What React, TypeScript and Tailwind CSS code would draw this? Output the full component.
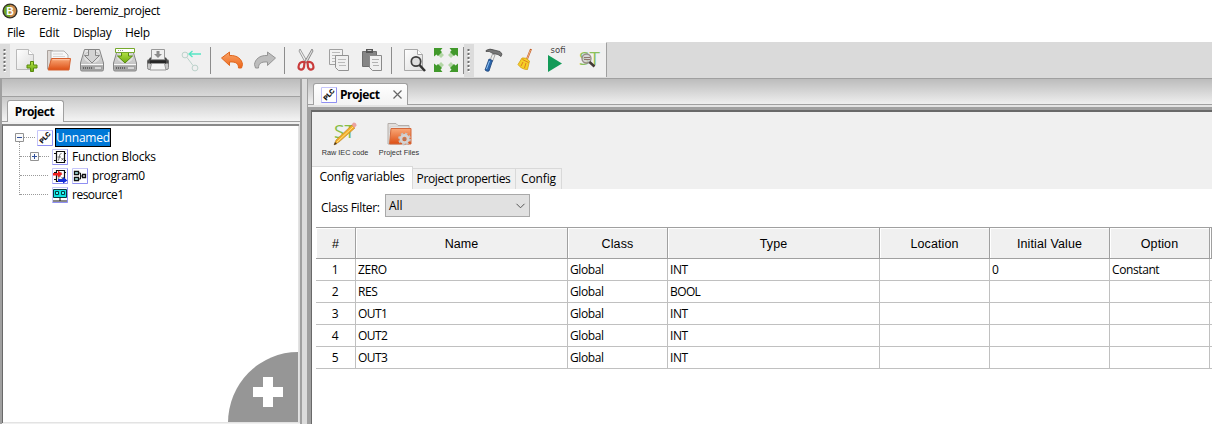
import React from "react";

type IconProps = { className?: string };

const Svg = ({ w = 24, h = 24, className = "", children }: { w?: number; h?: number; className?: string; children: React.ReactNode }) => (
  <svg width={w} height={h} viewBox={`0 0 ${w} ${h}`} className={`block shrink-0 overflow-visible ${className}`} fill="none">
    {children}
  </svg>
);

const Defs = () => (
  <svg width="0" height="0" className="absolute">
    <defs>
      <linearGradient id="orange" x1="0" y1="0" x2="0" y2="1"><stop offset="0" stopColor="#f9a877" /><stop offset="1" stopColor="#dd4f14" /></linearGradient>
      <linearGradient id="metal" x1="0" y1="0" x2="0" y2="1"><stop offset="0" stopColor="#e9e9e9" /><stop offset="1" stopColor="#b2b2b2" /></linearGradient>
      <linearGradient id="paper" x1="0" y1="0" x2="1" y2="1"><stop offset="0" stopColor="#ffffff" /><stop offset="1" stopColor="#dcdcdc" /></linearGradient>
      <linearGradient id="green" x1="0" y1="0" x2="0" y2="1"><stop offset="0" stopColor="#b5e345" /><stop offset="1" stopColor="#6dab13" /></linearGradient>
      <linearGradient id="undo" x1="0" y1="0" x2="0" y2="1"><stop offset="0" stopColor="#f9a56a" /><stop offset="1" stopColor="#ee6518" /></linearGradient>
    </defs>
  </svg>
);

const Logo = () => (
  <Svg w={16} h={16}>
    <circle cx="8" cy="8" r="7.6" fill="#35302a" />
    <path d="M8 1.8A6.2 6.2 0 0 1 8 14.2Z" fill="#c98a4e" />
    <path d="M8 1.8A6.2 6.2 0 0 0 8 14.2Z" fill="#6fa322" />
    <text x="8" y="11.800" textAnchor="middle" fill="#fff" className="font-['Liberation_Sans',sans-serif] text-[10.5px] font-bold tracking-normal">B</text>
  </Svg>
);

const NewIcon = ({ className }: IconProps) => (
  <Svg className={className}>
    <path d="M1.500 1.500h12l5 5v15h-17z" fill="url(#paper)" stroke="#bababa" />
    <path d="M13.500 1.500v5h5" fill="#fff" stroke="#bbb" />
    <path d="M15.500 13.500h3v3.500h3.500v3h-3.500v3.500h-3v-3.500H12v-3h3.500z" fill="url(#green)" stroke="#58890f" />
  </Svg>
);
const OpenIcon = ({ className }: IconProps) => (
  <Svg w={25} className={className}>
    <path d="M1.500 21V2.500h5l1 2h3V21z" fill="#ded8d4" stroke="#aaa29d" />
    <path d="M5 3h13l4 4v8H5z" fill="#f7f7f7" stroke="#b2b2b2" />
    <path d="M7 6h10M7 8.500h12" stroke="#d5d5d5" />
    <path d="M5.500 10.500h19l-1.500 11.500H2.200z" fill="url(#orange)" stroke="#d6602e" />
    <path d="M6.500 11.700h17" stroke="#ffc6a5" />
  </Svg>
);
const Drive = () => (
  <>
    <path d="M4.500 1.500h15L23.500 15v6.500q0 1.500-1.500 1.500H2q-1.500 0-1.500-1.500V15z" fill="url(#metal)" stroke="#858585" />
    <ellipse cx="12" cy="9.500" rx="8.500" ry="6" stroke="#c4c4c4" fill="#e0e0e0" />
    <path d="M1 16.500h22" stroke="#f7f7f7" />
    <path d="M1.500 17.500h21v4.500h-21z" fill="#a2a2a2" />
    <path d="M3 20h10" stroke="#666" strokeWidth="2" strokeDasharray="1 1" />
    <path d="M15 20h6" stroke="#d5d5d5" strokeWidth="2" />
  </>
);
const SaveIcon = ({ className }: IconProps) => (
  <Svg className={className}><Drive /><path d="M8.500 1.500h7v6h4L12 15 4.500 7.500h4z" fill="#d3d3d3" stroke="#858585" /></Svg>
);
const SaveAsIcon = ({ className }: IconProps) => (
  <Svg className={className}>
    <Drive /><path d="M8.500 4v4h-4L12 15l7.500-7h-4V4z" fill="url(#green)" stroke="#56890f" />
    <path d="M2.500.5h19v4h-19z" fill="#fff" stroke="#76a92c" /><path d="M5 2.500h6" stroke="#999" strokeDasharray="1 1" />
  </Svg>
);
const PrintIcon = ({ className }: IconProps) => (
  <Svg className={className}>
    <path d="M1.500 12h21v7.500q0 2-1.500 2H3q-1.500 0-1.500-2z" fill="#cacaca" stroke="#888" />
    <path d="M4 9.500h16l2.500 4v2h-21v-2z" fill="#4a4a4a" />
    <path d="M5.500 1.500h13v10h-13z" fill="#f0f0f0" stroke="#999" />
    <path d="M10.500 3h3v3h2.500l-4 4-4-4h2.500z" fill="#8c8c8c" />
    <path d="M4 12.500h16v3H4z" fill="#262626" />
    <path d="M5.500 15.500h13l1.500 6.500H4z" fill="#f4f4f4" stroke="#999" />
  </Svg>
);
const LinkIcon = ({ className }: IconProps) => (
  <Svg className={className}>
    <circle cx="5" cy="7" r="2.900" stroke="#bcd2cb" /><circle cx="15" cy="20" r="2.900" stroke="#bcd2cb" />
    <path d="m7 9.500 6 8" stroke="#bcd2cb" /><path d="M9 6h12M12.500 3 9 6l3.500 3" stroke="#55e5c3" strokeWidth="1.300" />
  </Svg>
);
const UndoIcon = ({ className }: IconProps) => (
  <Svg className={className}><path d="M1.500 10 9.500 4v3.500c8-.5 12.500 4 13 9l-1 3.500h-3c0-4-2-6.500-9-6v3.500z" fill="url(#undo)" stroke="#df671e" /></Svg>
);
const RedoIcon = ({ className }: IconProps) => (
  <Svg className={className}><path d="M22.500 10 14.500 4v3.500C6.500 7 2 11.500 1.500 16.500l1 3.500h3c0-4 2-6.500 9-6v3.500z" fill="#bdbdbd" stroke="#959595" /></Svg>
);
const CutIcon = ({ className }: IconProps) => (
  <Svg className={className}>
    <path d="m6 1 7.500 13-2 1L5 3z" fill="#eee" stroke="#888" strokeWidth=".8" /><path d="m18 1-7.500 13 2 1L19 3z" fill="#ddd" stroke="#777" strokeWidth=".8" />
    <path d="M10.500 14C6.500 13 4.500 16 4.500 19s4.500 4 5.500 0zM13.500 14c4-1 6 2 6 5s-4.500 4-5.500 0z" stroke="#c93b3b" strokeWidth="2.200" />
  </Svg>
);
const CopyIcon = ({ className }: IconProps) => (
  <Svg className={className}>
    <path d="M2.500 1.500h13v15h-13z" fill="#f2f2f2" stroke="#a0a0a0" /><path d="M5 4.500h8M5 7.500h5M5 10.500h3M5 13.500h3" stroke="#bababa" />
    <path d="M8.500 7.500h13v15h-10l-3-3z" fill="#f0f0f0" stroke="#929292" /><path d="M11 11.500h8M11 14.500h7M12 17.500h7" stroke="#bababa" />
  </Svg>
);
const PasteIcon = ({ className }: IconProps) => (
  <Svg className={className}>
    <path d="M2.500 3.500h14v15h-14z" fill="#858585" stroke="#6e6e6e" /><path d="M6 1h7v4H6z" fill="#555" /><path d="M7.500 2.500h4" stroke="#ccc" />
    <path d="M9.500 7.500h12v15h-9l-3-3z" fill="#f0f0f0" stroke="#8a8a8a" /><path d="M12 11.500h7M12 14.500h6M13 17.500h6" stroke="#b2b2b2" />
  </Svg>
);
const PreviewIcon = ({ className }: IconProps) => (
  <Svg className={className}>
    <path d="M1.500 1.500h13l5 5v16h-18z" fill="url(#paper)" stroke="#a8a8a8" /><path d="M14.500 1.500v5h5" fill="#fff" stroke="#a8a8a8" />
    <circle cx="13" cy="13.500" r="4.700" stroke="#3e3e3e" strokeWidth="1.700" fill="#dedede" /><path d="m16.500 17 5.500 6" stroke="#333" strokeWidth="2.500" />
  </Svg>
);
const ExpandIcon = ({ className }: IconProps) => (
  <Svg className={className}>
    <path d="m4 7 3-3 3 3-3 3zM20 7l-3-3-3 3 3 3zM4 17l3 3 3-3-3-3zM20 17l-3 3-3-3 3-3z" fill="#b3d6a6" />
    <path d="M0 0h8.500L6.500 2.500 8 4 4 8 2.500 6.500 0 8.500zM24 0h-8.500l2 2.500L16 4l4 4 1.500-1.500L24 8.500zM0 24h8.500l-2-2.500L8 20l-4-4-1.500 1.500L0 15.500zM24 24h-8.500l2-2.500L16 20l4-4 1.500 1.500 2.500-2z" fill="#41992b" />
  </Svg>
);
const HammerIcon = ({ className }: IconProps) => (
  <Svg className={className}>
    <path d="m11.500 6 2.500 1-2.500 6.500-2.500-1z" fill="#eee" stroke="#888" strokeWidth=".7" />
    <path d="m8 11 3.500 1.500L8 23q-2 1-4-1z" fill="#2b67ae" stroke="#1c4278" strokeWidth=".8" /><path d="m8.500 13-3 8" stroke="#8fc0ef" />
    <path d="M5 2.500Q9 0 13 2l6 1.500L21 6l-1 2.500-3-2-5-1Q8 2.500 5 3.500z" fill="#777" stroke="#4b4b4b" strokeWidth=".8" />
  </Svg>
);
const BroomIcon = ({ className }: IconProps) => (
  <Svg className={className}>
    <path d="m17 1-4 10" stroke="#c05a24" strokeWidth="2" /><path d="m16.500 2-3.500 9" stroke="#f2b07e" />
    <path d="M8 10q4-1 7.500 3l-2 8.500q-6 0-9.500-5z" fill="#f5cf24" stroke="#d19c13" strokeWidth=".8" />
    <path d="m8.500 11.500 6 3M9 14l-2 4M12 15l-1.500 5" stroke="#d35b20" strokeWidth=".7" />
  </Svg>
);
const StSearchIcon = ({ className }: IconProps) => (
  <Svg className={className}>
    <text x="0" y="17" fill="#8ac05a" className="font-['Open_Sans',sans-serif] text-[19px] tracking-[0px]">ST</text>
    <circle cx="7.500" cy="10.500" r="4.500" stroke="#978d88" fill="#ccc" fillOpacity=".75" strokeWidth="1.400" /><path d="M5 9.500h6M5 11.500h6" stroke="#91766c" /><path d="m10.500 14 5 4.500" stroke="#433b37" strokeWidth="2.600" />
  </Svg>
);

const Grip = () => (
  <div className="flex h-[33px] w-[10px] shrink-0 justify-center bg-[#dcdcdc]">
    <Svg w={4} h={33}><path d="M2 6v24" stroke="#fff" strokeWidth="2" strokeDasharray="2 2" /><path d="M1.500 5v24" stroke="#707070" strokeWidth="2" strokeDasharray="2 2" /></Svg>
  </div>
);
const Sep = ({ className = "" }: IconProps) => <div className={`h-[27px] w-px shrink-0 bg-[#8c8c8c] ${className}`} />;

const Toolbar = () => (
  <div className="flex h-[36px] bg-[#dadada]">
    <div className="flex h-[35px] w-[607px] items-center border-t border-r border-r-[#a0a0a0] border-t-white bg-[#f0f0f0]">
      <Grip />
      <NewIcon className="ml-[5px]" />
      <OpenIcon className="ml-[7px]" />
      <SaveIcon className="ml-[9px]" />
      <SaveAsIcon className="ml-[9px]" />
      <PrintIcon className="ml-[9px]" />
      <LinkIcon className="ml-[10px]" />
      <Sep className="ml-[6px]" />
      <UndoIcon className="ml-[9px]" />
      <RedoIcon className="ml-[9px]" />
      <Sep className="ml-[7px]" />
      <CutIcon className="ml-[9px]" />
      <CopyIcon className="ml-[9px]" />
      <PasteIcon className="ml-[9px]" />
      <Sep className="ml-[7px]" />
      <PreviewIcon className="ml-[11px]" />
      <ExpandIcon className="ml-[7px]" />
      <Sep className="ml-[5px]" />
      <Grip />
      <HammerIcon className="ml-[7px]" />
      <BroomIcon className="ml-[9px]" />
      <div className="ml-[8px] flex h-[30px] w-6 flex-col items-center font-['DejaVu_Sans',sans-serif] text-[8.5px] leading-[10px] text-[#444]">
        <span>sofi</span>
        <Svg w={14} h={17} className="-ml-[6px]"><path d="M0 0 14 8.500 0 17z" fill="#139b58" /></Svg>
      </div>
      <StSearchIcon className="ml-[9px]" />
    </div>
  </div>
);

const IconFrame = ({ children }: { children: React.ReactNode }) => (
  <Svg w={16} h={16}>
    <path d="M.5.500h15v15H.5z" fill="#fff" stroke="#c6c6fa" /><path d="M15.500.500v15H.5" stroke="#8f8ff2" />{children}
  </Svg>
);
const PlcIcon = () => (
  <IconFrame>
    <text transform="translate(5.200 13.700) rotate(-47)" fill="#000" stroke="#000" strokeWidth=".2" className="font-['Liberation_Sans',sans-serif] text-[6.5px] font-bold tracking-[0px]">PLC</text>
  </IconFrame>
);
const BlockIcon = ({ arrows = false }: { arrows?: boolean }) => (
  <IconFrame>
    <path d="M4.500 2.500h8v11h-8zM2 4.500h2.500M2 11.500h2.500M12.500 4.500H14M12.500 11.500H14" stroke="#111" strokeWidth="1.200" />
    <path d="M9.500 4.500q-1.500 0-1.800 1.500L6.500 11.500M5.500 8H9M9.500 9l2 2.500M11.500 9l-2 2.500" stroke="#555" strokeWidth=".8" />
    {arrows && <><path d="M1 5h5V2.500L10.500 6 6 9.500V7.500H1z" fill="#ef2020" /><path d="M6 11h5V9l4.500 3.500L11 15.500V14H6z" fill="#1730d8" /></>}
  </IconFrame>
);
const FbdIcon = () => (
  <IconFrame>
    <path d="M2.500 3.500h4v3h-4zM2.500 9.500h4v3h-4z" fill="#bff" stroke="#111" strokeWidth="1.300" /><path d="M10.500 6.500h3v3h-3z" fill="#eee" stroke="#111" strokeWidth="1.300" /><path d="M6.500 5h2v6h-2M8.500 8h2" stroke="#111" />
  </IconFrame>
);
const ResourceIcon = () => (
  <IconFrame>
    <path d="M1.500 2.500h13v8h-13z" fill="#10e0e0" stroke="#0a3a3e" /><path d="M3.500 4.500h3v3h-3zM9.500 4.500h3v3h-3z" fill="#3ff" stroke="#063d42" /><path d="M8 10.500v3.500M1 14h14" stroke="#111" />
  </IconFrame>
);
const Expander = ({ open }: { open?: boolean }) => (
  <Svg w={9} h={9}><path d="M.5.500h8v8h-8z" fill="#fafafa" stroke="#929292" /><path d={open ? "M2 4.500h5" : "M2 4.500h5M4.500 2v5"} stroke="#31519b" /></Svg>
);

const Dots = ({ className = "" }: IconProps) => <div className={`h-0 shrink-0 border-t border-dotted border-[#9a9a9a] ${className}`} />;

const Tree = () => (
  <div className="relative min-h-0 flex-1 overflow-hidden border-r border-b border-[#e3e3e3] bg-white pt-[2px]">
    <div className="absolute top-[16px] left-[16px] h-[53px] border-l border-dotted border-[#9a9a9a]" />
    <div className="relative flex h-[19px] items-center pl-[12px]">
      <Expander open /><Dots className="mr-[2px] w-[11px]" /><PlcIcon />
      <span className="ml-[2px] flex h-[19px] w-[56px] items-center justify-center border border-black bg-[#0078d7] tracking-[-0.2px] text-white">Unnamed</span>
    </div>
    <div className="relative flex h-[19px] items-center pl-[17px]">
      <Dots className="w-[10px]" /><Expander /><Dots className="mr-[3px] w-[10px]" /><BlockIcon />
      <span className="ml-[4px] tracking-[-0.25px]">Function Blocks</span>
    </div>
    <div className="relative flex h-[19px] items-center pl-[17px]">
      <Dots className="mr-[4px] w-[28px]" /><BlockIcon arrows /><span className="w-1" /><FbdIcon />
      <span className="ml-[4px] tracking-[-0.35px]">program0</span>
    </div>
    <div className="relative flex h-[19px] items-center pl-[17px]">
      <Dots className="mr-[4px] w-[28px]" /><ResourceIcon />
      <span className="ml-[4px] tracking-[-0.5px]">resource1</span>
    </div>
    <svg width="70" height="71" viewBox="0 0 70 71" className="absolute right-0 -bottom-px">
      <path d="M0 71A70 71 0 0 1 70 0v71z" fill="#969696" /><path d="M35 25h10v10h10v10H45v10H35V45H25V35h10z" fill="#fff" />
    </svg>
  </div>
);

const SidePanel = () => (
  <div className="flex w-[302px] flex-col border-x-2 border-[#a0a0a0]">
    <div className="h-[17px] bg-linear-to-b from-[#bcbcbc] to-[#d9d9d9]" />
    <div className="flex h-[26px] items-end border-y border-[#a0a0a0] bg-linear-to-b from-[#c9c9c9] to-[#f4f4f4] pl-[5px]">
      <div className="-mb-px flex h-[22px] w-[57px] items-center justify-center rounded-t-[3px] border border-b-0 border-[#a0a0a0] bg-linear-to-b from-white to-[#f4f4f4] pr-[2px] font-bold tracking-[-0.45px]">Project</div>
    </div>
    <div className="h-[2px] bg-[#f0f0f0]" />
    <div className="mr-[1px] flex min-h-0 flex-1 flex-col border-t-2 border-l border-t-[#8a8a8a] border-l-[#696969]"><Tree /></div>
    <div className="h-[1px] bg-[#f0f0f0]" />
  </div>
);

const columns = ["#", "Name", "Class", "Type", "Location", "Initial Value", "Option", ""];
const rows = [
  ["1", "ZERO", "Global", "INT", "", "0", "Constant", ""],
  ["2", "RES", "Global", "BOOL", "", "", "", ""],
  ["3", "OUT1", "Global", "INT", "", "", "", ""],
  ["4", "OUT2", "Global", "INT", "", "", "", ""],
  ["5", "OUT3", "Global", "INT", "", "", "", ""],
];

const VariableTable = () => (
  <div className="ml-1 border-t border-[#a0a0a0]">
    <div className="grid h-[31px] grid-cols-[40px_212px_100px_212px_110px_120px_100px_2px] border-b border-[#a0a0a0] font-['Liberation_Sans',Arial,sans-serif] text-[12.5px] tracking-[0.1px]">
      {columns.map((c, i) => (
        <div key={i} className="flex items-center justify-center border-r border-r-[#a0a0a0] bg-[#f0f0f0] pt-[2px] shadow-[inset_1px_1px_0_#fff]">{c}</div>
      ))}
    </div>
    {rows.map((r) => (
      <div key={r[0]} className="grid h-[22px] grid-cols-[40px_212px_100px_212px_110px_120px_100px_2px] border-b border-[#c0c0c0] tracking-[-0.4px]">
        {r.map((c, i) => (
          <div key={i} className={`flex items-center border-r border-[#c0c0c0] ${i === 0 ? "justify-center pr-px" : "pl-[2px]"} ${c === "BOOL" || c.startsWith("OUT") ? "tracking-[-0.6px]" : ""}`}>{c}</div>
        ))}
      </div>
    ))}
  </div>
);

const RawCodeIcon = () => (
  <Svg>
    <text x="1" y="16" fill="#85bd45" className="font-['Open_Sans',sans-serif] text-[19px] tracking-[0px]">ST</text>
    <path d="m1 23 2-5L19 3l3 3L6 20z" fill="#f2ad27" stroke="#b98029" strokeWidth=".6" /><path d="m4 20 16-15" stroke="#ffe083" />
    <path d="m18.500 2.500 2-2q3 0 3 3L21.500 6z" fill="#eaa2a0" /><path d="m1 23 1-3 2 2z" fill="#45341e" />
  </Svg>
);
const FilesIcon = () => (
  <Svg w={26}>
    <path d="M2 22V1.500h8l2 2h11V22z" fill="#e2dedb" stroke="#b4aeaa" /><path d="M4 5h19v6H4z" fill="#fff" stroke="#ccc" />
    <path d="M5 6.500h20v15.500H3.500z" fill="url(#orange)" stroke="#d3693c" />
    <circle cx="18.500" cy="17" r="5.500" stroke="#c3c3c3" strokeWidth="1.800" strokeDasharray="2.400 1.900" /><circle cx="18.500" cy="17" r="3.600" stroke="#d3d3d3" strokeWidth="2.800" /><circle cx="18.500" cy="17" r="1.600" fill="#b07a5f" />
  </Svg>
);

const Editor = () => (
  <div className="flex min-w-0 flex-1 flex-col border-l border-[#a0a0a0]">
    <div className="flex h-[26px] items-end border-b border-[#a0a0a0] bg-linear-to-b from-[#bcbcbc] to-[#efefef] pl-[5px]">
      <div className="-mb-px flex h-[22px] w-[95px] items-center rounded-t-[3px] border border-b-0 border-[#a0a0a0] bg-linear-to-b from-white to-[#f3f3f3] pl-[7px]">
        <PlcIcon />
        <span className="ml-[3px] w-[43px] font-bold tracking-[-0.45px]">Project</span>
        <Svg w={9} h={9} className="ml-[10px]"><path d="m.5.500 8 8m0-8-8 8" stroke="#666" strokeWidth="1.200" /></Svg>
      </div>
    </div>
    <div className="h-[2px] bg-[#e4e4e4]" />
    <div className="flex min-h-0 flex-1 flex-col border-t-[3px] border-l-[3px] border-[#a0a0a0]">
      <div className="flex min-h-0 flex-1 flex-col overflow-hidden border-t-2 border-l border-[#696969] bg-white">
        <div className="flex h-[54px] bg-[#f0f0f0] pt-[10px] font-['Liberation_Sans',Arial,sans-serif] text-[7.3px] leading-[8px] text-[#333]">
          <div className="ml-[8px] flex w-[50px] flex-col items-center whitespace-nowrap"><RawCodeIcon /><span className="mt-[3px] tracking-[0px]">Raw IEC code</span></div>
          <div className="ml-[6px] flex w-[46px] flex-col items-center whitespace-nowrap"><FilesIcon /><span className="mt-[3px] tracking-[0.02px]">Project Files</span></div>
        </div>
        <div className="flex h-[23px] items-end bg-[#f0f0f0]">
          <div className="flex h-[23px] w-[101px] items-center justify-center border-t border-r border-[#d9d9d9] bg-white pb-[3px] tracking-[-0.25px]">Config variables</div>
          <div className="flex h-[21px] w-[103px] items-center justify-center border border-b-0 border-l-0 border-[#d9d9d9] pr-px tracking-[-0.37px]">Project properties</div>
          <div className="flex h-[21px] w-[46px] items-center justify-center border border-b-0 border-l-0 border-[#d9d9d9] tracking-[-0.15px]">Config</div>
        </div>
        <div className="flex h-[38px] items-start pt-[5px] pl-[9px]">
          <span className="mt-[6px] w-[64px] leading-[16px] tracking-[-0.35px] whitespace-nowrap">Class Filter:</span>
          <div className="flex h-[23px] w-[145px] items-center justify-between border border-[#a9a9a9] bg-[#e1e1e1] pr-[4px] pl-[3px]">
            All
            <Svg w={9} h={6}><path d="m.5.800 4 4 4-4" stroke="#555" /></Svg>
          </div>
        </div>
        <VariableTable />
      </div>
    </div>
  </div>
);

export default function App() {
  return (
    <div className="flex h-[424px] w-[1212px] flex-col overflow-hidden bg-white font-['Open_Sans','Noto_Sans',sans-serif] text-[12px] leading-[16px] text-black">
      <Defs />
      <header className="flex h-[22px] shrink-0 items-center gap-[5px] pl-[2px] tracking-[-0.36px]">
        <Logo /><span>Beremiz - beremiz_project</span>
      </header>
      <nav className="flex h-[20px] shrink-0 items-center pt-px pl-[7px] tracking-[-0.3px]">
        <span className="w-8">File</span><span className="w-[34px]">Edit</span><span className="w-[52px]">Display</span><span>Help</span>
      </nav>
      <Toolbar />
      <main className="flex min-h-0 flex-1 gap-[5px] border-t border-[#a0a0a0] bg-[#dcdcdc]">
        <SidePanel />
        <Editor />
      </main>
    </div>
  );
}
